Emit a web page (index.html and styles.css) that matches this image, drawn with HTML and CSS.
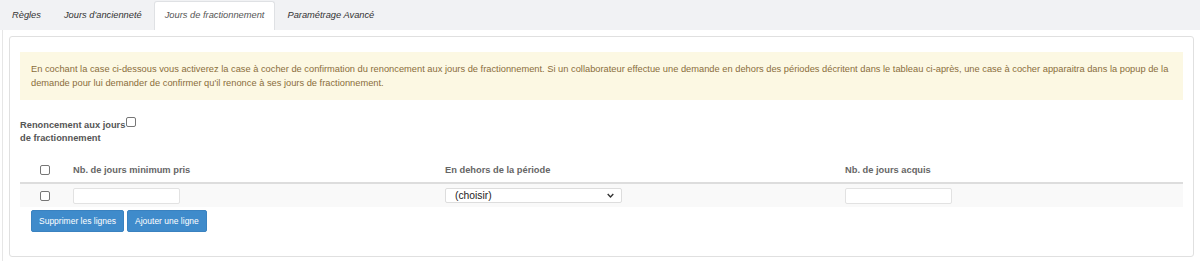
FILE: index.html
```html
<!DOCTYPE html>
<html lang="fr">
<head>
<meta charset="utf-8">
<link rel="stylesheet" href="styles.css">
</head>
<body>
<div class="tabs">
  <a class="tab">Règles</a>
  <a class="tab">Jours d'ancienneté</a>
  <a class="tab active">Jours de fractionnement</a>
  <a class="tab">Paramétrage Avancé</a>
</div>
<div class="content">
  <div class="panel">
    <div class="alert">En cochant la case ci-dessous vous activerez la case à cocher de confirmation du renoncement aux jours de fractionnement. Si un collaborateur effectue une demande en dehors des périodes décritent dans le tableau ci-après, une case à cocher apparaitra dans la popup de la demande pour lui demander de confirmer qu'il renonce à ses jours de fractionnement.</div>
    <div class="renonce">
      <label class="renonce-label">Renoncement aux jours<span class="cb inline"></span><br>de fractionnement</label>
    </div>
    <table class="grid">
      <thead>
        <tr>
          <th class="c-cb"><span class="cb"></span></th>
          <th class="c-min">Nb. de jours minimum pris</th>
          <th class="c-per">En dehors de la période</th>
          <th class="c-acq">Nb. de jours acquis</th>
        </tr>
      </thead>
      <tbody>
        <tr>
          <td class="c-cb"><span class="cb"></span></td>
          <td><span class="input"></span></td>
          <td><span class="select">(choisir)<svg class="chev" viewBox="0 0 10 6" width="7" height="5"><path d="M1 1 L5 5 L9 1" fill="none" stroke="#333" stroke-width="2"/></svg></span></td>
          <td><span class="input"></span></td>
        </tr>
      </tbody>
    </table>
    <div class="actions">
      <button class="btn">Supprimer les lignes</button>
      <button class="btn">Ajouter une ligne</button>
    </div>
  </div>
</div>
</body>
</html>
```
FILE: styles.css
```css
html, body { margin: 0; padding: 0; background: #fff; }
body { font-family: "Liberation Sans", Arial, sans-serif; font-size: 9.3px; color: #333; }

.tabs {
  display: flex;
  align-items: flex-end;
  height: 30px;
  background: #f1f2f4;
  padding-left: 1px;
  box-sizing: border-box;
}
.tab {
  display: block;
  font-style: italic;
  font-size: 9.3px;
  color: #333;
  padding: 0 10px;
  height: 28px;
  line-height: 26px;
  border: 1px solid transparent;
  border-bottom: 0;
  border-radius: 3px 3px 0 0;
  margin-right: 1px;
}
.tab.active {
  background: #fff;
  border-color: #dfe1e4;
  color: #555;
}

.content {
  margin-left: 2px;
  border-left: 1px solid #e6e6e6;
  padding: 6px 6px 4px 6px;
}
.panel {
  border: 1px solid #e0e0e0;
  border-radius: 3px;
  padding: 15px 10px 24px 10px;
}
.alert {
  background: #fcf8e3;
  color: #8a6d3b;
  padding: 10px 11px 10px 11px;
  line-height: 14px;
  font-size: 9.3px;
}
.renonce { padding-top: 17px; }
.renonce-label {
  display: block;
  font-weight: bold;
  color: #555;
  line-height: 13px;
}
.cb {
  display: inline-block;
  width: 8px;
  height: 8px;
  border: 1px solid #767676;
  border-radius: 2px;
  background: #fff;
  vertical-align: middle;
}
.cb.inline { vertical-align: 1px; margin-left: 1px; }

.grid {
  width: 100%;
  border-collapse: collapse;
  margin-top: 14px;
}
.grid th {
  text-align: left;
  font-weight: bold;
  color: #666;
  height: 21px;
  padding: 0 0 2px 0;
  border-bottom: 2px solid #ddd;
  vertical-align: middle;
}
.grid td {
  background: #f9f9f9;
  height: 23px;
  padding: 0;
  vertical-align: middle;
}
.grid .c-cb { width: 33px; padding-left: 20px; }
.c-min { width: 372px; }
.c-per { width: 400px; }
.input {
  display: block;
  width: 105px;
  height: 14px;
  border: 1px solid #e2e2e2;
  border-radius: 2px;
  background: #fff;
}
.select {
  display: flex;
  align-items: center;
  justify-content: space-between;
  width: 159px;
  height: 13px;
  padding: 0 7px 0 9px;
  border: 1px solid #ddd;
  border-radius: 2px;
  background: #fff;
  color: #222;
  font-size: 10.3px;
}
.actions {
  display: flex;
  gap: 3px;
  padding-left: 11px;
  margin-top: 3px;
}
.btn {
  font-family: "Liberation Sans", Arial, sans-serif;
  font-size: 8.5px;
  color: #fff;
  background: #3f8bcb;
  border: 1px solid #3a82c0;
  border-radius: 2px;
  height: 22px;
  padding: 0 7px;
}
```
